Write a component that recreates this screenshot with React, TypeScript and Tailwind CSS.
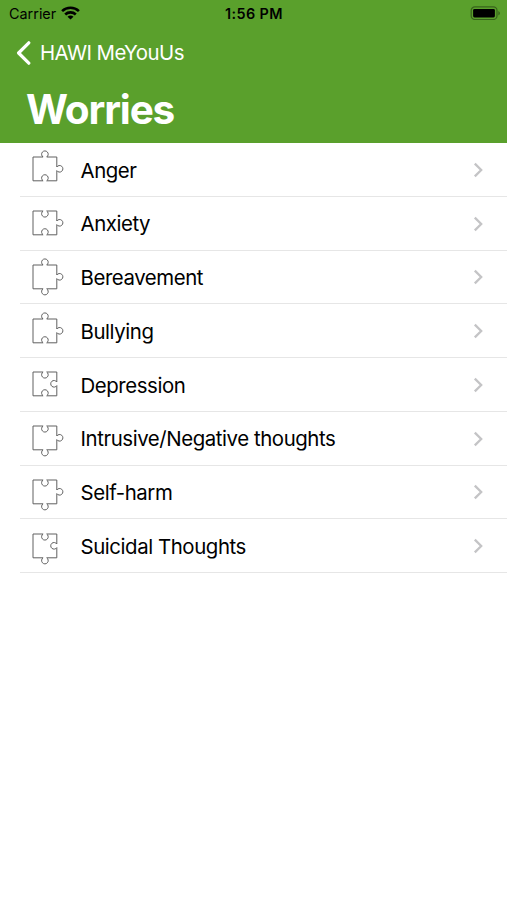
type Side = "tab" | "notch";

interface Worry {
  label: string;
  top: Side;
  right: Side;
  bottom: Side;
}

const worries: Worry[] = [
  { label: "Anger", top: "tab", right: "tab", bottom: "notch" },
  { label: "Anxiety", top: "notch", right: "tab", bottom: "notch" },
  { label: "Bereavement", top: "tab", right: "tab", bottom: "tab" },
  { label: "Bullying", top: "tab", right: "tab", bottom: "notch" },
  { label: "Depression", top: "notch", right: "notch", bottom: "notch" },
  { label: "Intrusive/Negative thoughts", top: "notch", right: "tab", bottom: "tab" },
  { label: "Self-harm", top: "notch", right: "tab", bottom: "tab" },
  { label: "Suicidal Thoughts", top: "notch", right: "notch", bottom: "tab" },
];

function PuzzlePiece({ top, right, bottom }: Omit<Worry, "label">) {
  const arc = (side: Side) => `a3.3 3.3 0 1 ${side === "tab" ? 1 : 0}`;
  const d = [
    "M3 8 H13.1",
    `${arc(top)} 3.6 0 H26.8 V18`,
    `${arc(right)} 0 3.6 V31.8 H16.7`,
    `${arc(bottom)} -3.6 0 H3 Z`,
  ].join(" ");

  return (
    <svg width="34" height="40" viewBox="0 0 34 40" fill="none" className="shrink-0">
      <path d={d} stroke="#606060" strokeWidth="1" />
    </svg>
  );
}

function StatusBar() {
  return (
    <div className="grid h-7 grid-cols-3 items-center pr-[6px] pl-[9px] text-black">
      <div className="flex items-center gap-[5px]">
        <span className="text-[14.4px] leading-7">Carrier</span>
        <svg width="19" height="14" viewBox="0 0 19 14" fill="none" stroke="currentColor" strokeWidth="2.6" className="mb-[2px]">
          <path d="M1.1 5.1C5.7 0.6 13.3 0.6 17.9 5.1" />
          <path d="M4.2 8.5C7.1 5.7 11.9 5.7 14.8 8.5" />
          <path d="M9.5 13.6L6.5 10.7C8.2 9.1 10.8 9.1 12.5 10.7Z" fill="currentColor" stroke="none" />
        </svg>
      </div>
      <span className="pr-[2px] text-center text-[14.4px] leading-7 font-semibold tracking-[0.4px]">1:56 PM</span>
      <svg width="31" height="14" viewBox="0 0 31 14" className="mb-[2px] justify-self-end">
        <rect x="1.2" y="0.9" width="25.8" height="12.6" rx="3.6" fill="none" stroke="#000" strokeOpacity="0.38" strokeWidth="1.2" />
        <rect x="3.1" y="2.9" width="21.8" height="8.6" rx="1.4" fill="#000" />
        <path d="M28.4 5C30.4 5.8 30.4 8.6 28.4 9.4Z" fill="#000" fillOpacity="0.4" />
      </svg>
    </div>
  );
}

export default function App() {
  return (
    <div className="h-[900px] w-[507px] overflow-hidden bg-white font-['Inter','Liberation_Sans',sans-serif]">
      <header className="h-[142.5px] bg-[#5aa02c] text-white">
        <StatusBar />
        <button className="flex h-[49px] items-center pl-[16px]">
          <svg width="15" height="24" viewBox="0 0 15 24" fill="none">
            <path d="M12.8 1.8L2.6 12L12.8 22.2" stroke="#fff" strokeWidth="3.2" strokeLinecap="round" strokeLinejoin="round" />
          </svg>
          <span className="ml-[9px] pt-[2px] text-[20.4px] tracking-[-0.55px]">HAWI MeYouUs</span>
        </button>
        <h1 className="pt-px pl-[26px] text-[40.5px] leading-[63px] font-bold tracking-[-1.15px]">Worries</h1>
      </header>
      <ul className="pt-[0.6px]">
        {worries.map(({ label, ...sides }) => (
          <li key={label} className="flex h-[53.75px] pl-5">
            <div className="flex flex-1 items-center border-b border-[#e6e6e6] pr-[22px] pl-[10px]">
              <PuzzlePiece {...sides} />
              <span className="ml-[16.5px] flex-1 pt-[3px] text-[20.4px] tracking-[-0.42px] text-black">{label}</span>
              <svg width="13" height="18" viewBox="0 0 13 18" fill="none" className="mt-px">
                <path d="M2.8 2.6L9.2 9L2.8 15.4" stroke="#c4c4c6" strokeWidth="2.3" />
              </svg>
            </div>
          </li>
        ))}
      </ul>
    </div>
  );
}
